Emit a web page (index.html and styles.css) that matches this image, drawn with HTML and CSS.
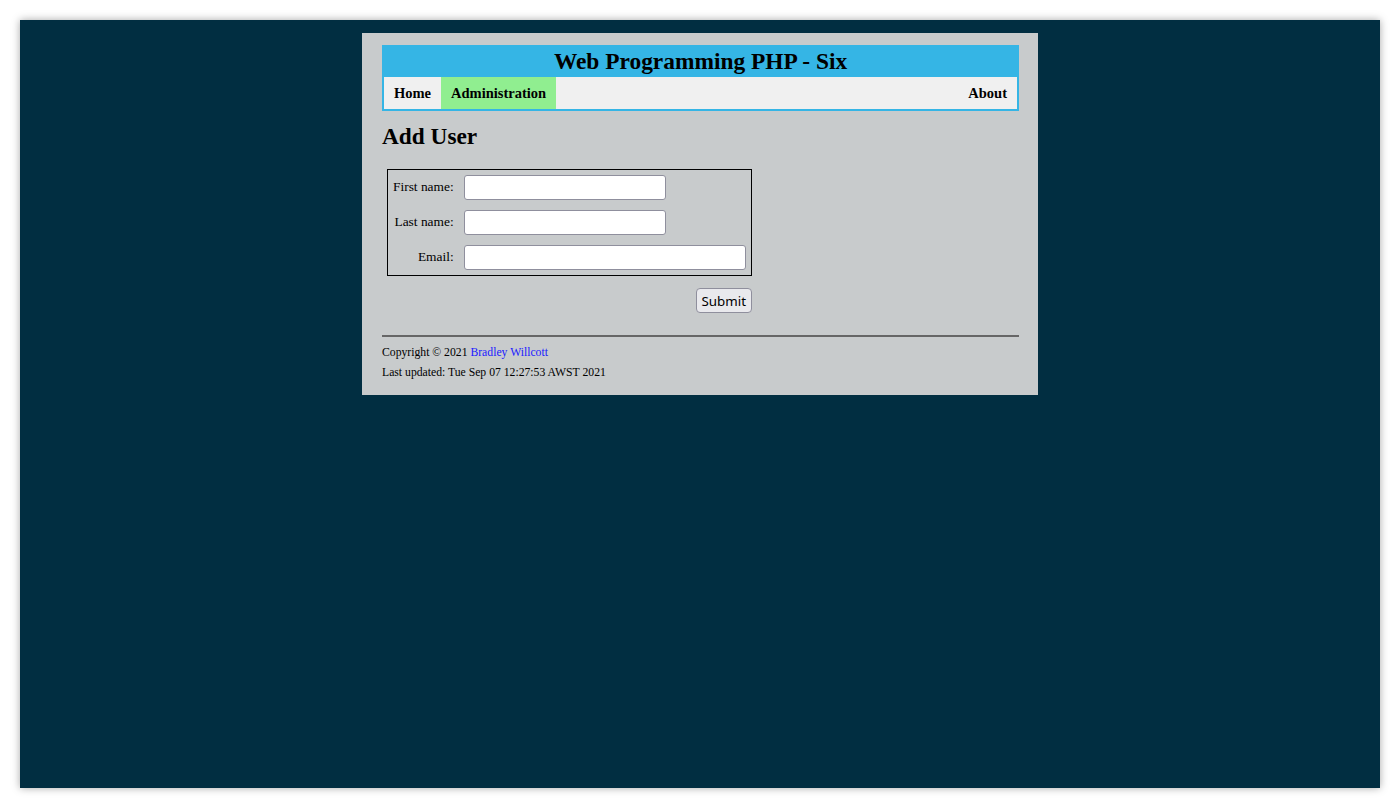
FILE: index.html
```html
<!DOCTYPE html>
<html lang="en">
<head>
<meta charset="utf-8">
<title>Web Programming PHP - Six</title>
<link rel="stylesheet" href="styles.css">
</head>
<body>
<div class="frame">
  <div class="page">
    <header class="masthead">
      <h1 class="site-title">Web Programming PHP - Six</h1>
      <nav class="nav">
        <a class="nav-link" href="#">Home</a>
        <a class="nav-link active" href="#">Administration</a>
        <a class="nav-link about" href="#">About</a>
      </nav>
    </header>
    <main class="content">
      <h2 class="page-title">Add User</h2>
      <form class="user-form">
        <table class="form-table">
          <tr>
            <td class="label-cell"><label for="fn">First name:</label></td>
            <td class="input-cell"><input id="fn" class="text-input short" type="text"></td>
          </tr>
          <tr>
            <td class="label-cell"><label for="ln">Last name:</label></td>
            <td class="input-cell"><input id="ln" class="text-input short" type="text"></td>
          </tr>
          <tr>
            <td class="label-cell"><label for="em">Email:</label></td>
            <td class="input-cell"><input id="em" class="text-input long" type="text"></td>
          </tr>
        </table>
        <div class="form-actions">
          <button type="button" class="submit-btn">Submit</button>
        </div>
      </form>
    </main>
    <footer class="footer">
      <hr class="rule">
      <p class="footer-line">Copyright © 2021 <a class="author" href="#">Bradley Willcott</a></p>
      <p class="footer-line">Last updated: Tue Sep 07 12:27:53 AWST 2021</p>
    </footer>
  </div>
</div>
</body>
</html>
```
FILE: styles.css
```css
html, body {
  margin: 0;
  padding: 0;
  background: #ffffff;
}

body {
  padding: 20px;
  font-family: "Liberation Serif", "Times New Roman", serif;
  color: #000;
}

.frame {
  height: 768px;
  background: #012e41;
  box-shadow: 0 0 8px rgba(0, 0, 0, 0.35);
  padding-top: 13px;
  box-sizing: border-box;
}

.page {
  width: 676px;
  margin: 0 auto;
  box-sizing: border-box;
  padding: 12px 19px 12px 20px;
  background: #c8cbcc;
}

.masthead {
  background: #35b5e5;
  border: 2px solid #35b5e5;
  border-top: 0;
}

.site-title {
  margin: 0;
  height: 32px;
  box-sizing: border-box;
  padding: 3px 0 3px;
  font-size: 23.4px;
  line-height: 26px;
  font-weight: bold;
  text-align: center;
}

.nav {
  display: flex;
  height: 32px;
  background: #f0f0f0;
}

.nav-link {
  display: block;
  padding: 1px 10px 0;
  font-size: 14.5px;
  line-height: 31px;
  font-weight: bold;
  color: #000;
  text-decoration: none;
}

.nav-link.active {
  background: #90ee90;
}

.nav-link.about {
  margin-left: auto;
}

.page-title {
  margin: 11px 0 19px;
  font-size: 23.3px;
  line-height: 28px;
  font-weight: bold;
}

.user-form {
  width: 370px;
  margin: 0;
}

.form-table {
  margin-left: 5px;
  border: 1px solid #000;
  border-spacing: 0;
  border-collapse: separate;
}

.form-table td {
  padding: 5px;
  vertical-align: middle;
}

.form-table td.label-cell {
  padding: 4px 5px 6px;
  text-align: right;
  font-size: 13.4px;
  white-space: nowrap;
}

.text-input {
  display: block;
  box-sizing: border-box;
  height: 25px;
  margin: 0;
  padding: 2px 4px;
  border: 1px solid #8f8f9d;
  border-radius: 3px;
  background: #fff;
}

.text-input.short {
  width: 202px;
}

.text-input.long {
  width: 282px;
}

.form-actions {
  margin-top: 12px;
  text-align: right;
}

.submit-btn {
  height: 25px;
  padding: 0 5px;
  font-family: "Noto Sans", "Open Sans", sans-serif;
  font-size: 13.33px;
  color: #000;
  background: #e9e9ed;
  border: 1px solid #8f8f9d;
  border-radius: 4px;
}

.footer {
  margin-top: 22px;
}

.rule {
  margin: 0 0 6px;
  height: 2px;
  border: 0;
  background: #666;
}

.footer-line {
  margin: 0;
  font-size: 11.7px;
  line-height: 20px;
}

.author {
  color: #1a1aff;
  text-decoration: none;
}
```
